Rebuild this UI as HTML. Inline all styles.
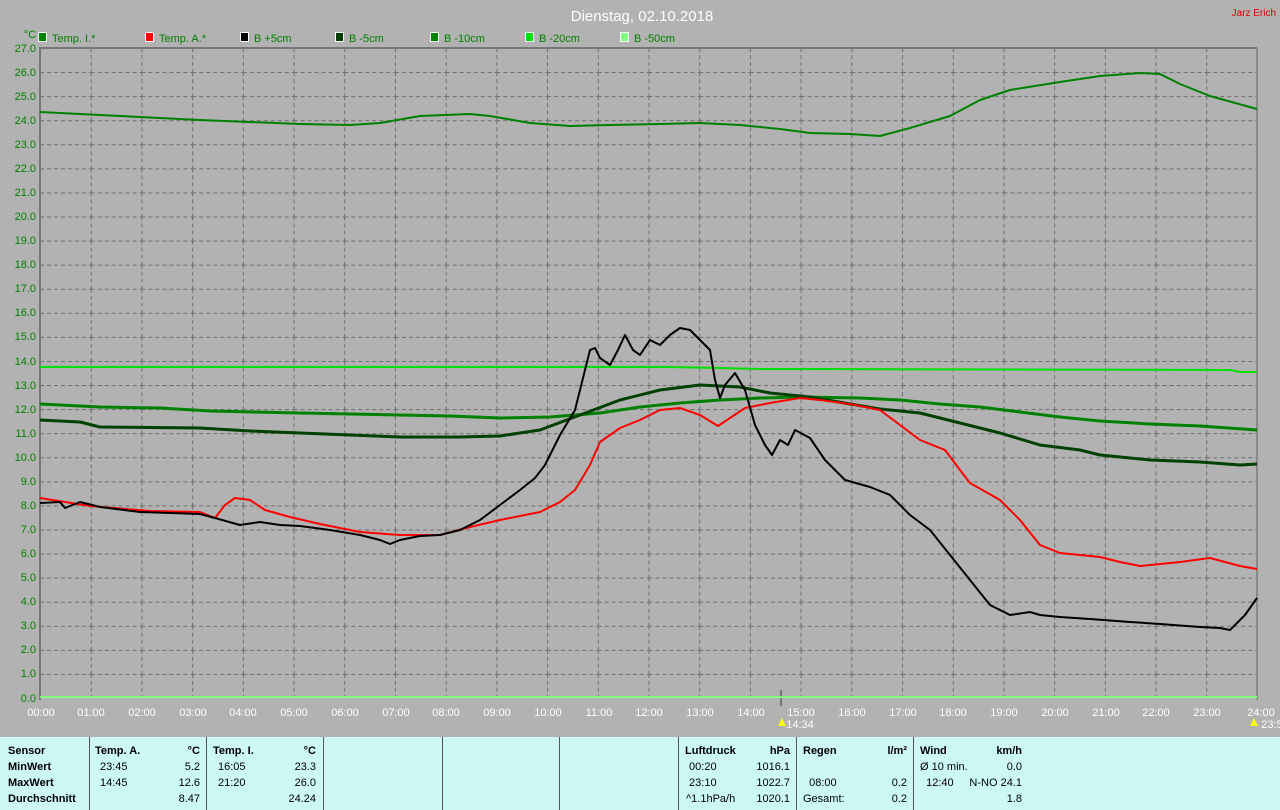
<!DOCTYPE html>
<html><head><meta charset="utf-8"><style>
html,body{margin:0;padding:0}
body{width:1280px;height:810px;background:#b2b2b2;position:relative;overflow:hidden;font-family:"Liberation Sans",sans-serif}
svg{position:absolute;left:0;top:0}
.p{position:absolute;left:0;top:737px;width:1280px;height:73px;background:#ccf8f6}
.d{position:absolute;top:0;width:1px;height:73px;background:#555}
.t{position:absolute;font-size:11px;color:#000;white-space:nowrap;line-height:16px}
.b{font-weight:bold}
</style></head><body>
<svg width="1280" height="737" font-family="Liberation Sans, sans-serif">
<defs>
<pattern id="g" x="40" y="48" width="50.708" height="24.074" patternUnits="userSpaceOnUse">
<line x1="0.5" y1="0" x2="0.5" y2="24.074" stroke="#6e6e6e" stroke-dasharray="4,3"/>
<line x1="0" y1="0.5" x2="50.708" y2="0.5" stroke="#6e6e6e" stroke-dasharray="4,3"/>
</pattern>
</defs>
<rect x="40" y="48" width="1217" height="650" fill="url(#g)"/>
<line x1="40" y1="48" x2="1257" y2="48" stroke="#777" stroke-width="2"/>
<line x1="40" y1="47" x2="40" y2="700" stroke="#777" stroke-width="2"/>
<line x1="1257" y1="48" x2="1257" y2="700" stroke="#888" stroke-width="2"/>
<line x1="781" y1="690" x2="781" y2="706" stroke="#777" stroke-width="2"/>
<text x="642" y="21" fill="#fff" font-size="15" text-anchor="middle">Dienstag, 02.10.2018</text>
<text x="1276" y="16" fill="#e00000" font-size="10" text-anchor="end">Jarz Erich</text>
<text x="30" y="38" fill="#008000" font-size="11" text-anchor="middle">°C</text>
<g font-size="11">
<rect x="38.5" y="32.5" width="8" height="9" fill="#008000" stroke="#fff"/><text x="52" y="42" fill="#008000">Temp. I.*</text>
<rect x="145.5" y="32.5" width="8" height="9" fill="#f00" stroke="#fff"/><text x="159" y="42" fill="#008000">Temp. A.*</text>
<rect x="240.5" y="32.5" width="8" height="9" fill="#000" stroke="#fff"/><text x="254" y="42" fill="#008000">B +5cm</text>
<rect x="335.5" y="32.5" width="8" height="9" fill="#004000" stroke="#fff"/><text x="349" y="42" fill="#008000">B -5cm</text>
<rect x="430.5" y="32.5" width="8" height="9" fill="#008000" stroke="#fff"/><text x="444" y="42" fill="#008000">B -10cm</text>
<rect x="525.5" y="32.5" width="8" height="9" fill="#00e000" stroke="#fff"/><text x="539" y="42" fill="#008000">B -20cm</text>
<rect x="620.5" y="32.5" width="8" height="9" fill="#80ff80" stroke="#fff"/><text x="634" y="42" fill="#008000">B -50cm</text>
</g>
<g font-size="11" fill="#008000" text-anchor="end">
<text x="36" y="52">27.0</text><text x="36" y="76">26.0</text><text x="36" y="100">25.0</text><text x="36" y="124">24.0</text><text x="36" y="148">23.0</text><text x="36" y="172">22.0</text><text x="36" y="196">21.0</text><text x="36" y="220">20.0</text><text x="36" y="244">19.0</text><text x="36" y="268">18.0</text><text x="36" y="292">17.0</text><text x="36" y="316">16.0</text><text x="36" y="340">15.0</text><text x="36" y="365">14.0</text><text x="36" y="389">13.0</text><text x="36" y="413">12.0</text><text x="36" y="437">11.0</text><text x="36" y="461">10.0</text><text x="36" y="485">9.0</text><text x="36" y="509">8.0</text><text x="36" y="533">7.0</text><text x="36" y="557">6.0</text><text x="36" y="581">5.0</text><text x="36" y="605">4.0</text><text x="36" y="629">3.0</text><text x="36" y="653">2.0</text><text x="36" y="677">1.0</text><text x="36" y="702">0.0</text>
</g>
<g font-size="11" fill="#fff" text-anchor="middle">
<text x="41" y="716">00:00</text><text x="91" y="716">01:00</text><text x="142" y="716">02:00</text><text x="193" y="716">03:00</text><text x="243" y="716">04:00</text><text x="294" y="716">05:00</text><text x="345" y="716">06:00</text><text x="396" y="716">07:00</text><text x="446" y="716">08:00</text><text x="497" y="716">09:00</text><text x="548" y="716">10:00</text><text x="599" y="716">11:00</text><text x="649" y="716">12:00</text><text x="700" y="716">13:00</text><text x="751" y="716">14:00</text><text x="801" y="716">15:00</text><text x="852" y="716">16:00</text><text x="903" y="716">17:00</text><text x="953" y="716">18:00</text><text x="1004" y="716">19:00</text><text x="1055" y="716">20:00</text><text x="1106" y="716">21:00</text><text x="1156" y="716">22:00</text><text x="1207" y="716">23:00</text><text x="1261" y="716">24:00</text>
<text x="800" y="728">14:34</text><text x="1272" y="728">23:5</text>
</g>
<polygon points="778,726 782,718 786,726" fill="#ff0"/>
<polygon points="1250,726 1254,718 1258,726" fill="#ff0"/>
<g fill="none" stroke-width="2" stroke-linejoin="round">
<line x1="40" y1="697" x2="1257" y2="697" stroke="#80ff80"/>
<polyline stroke="#00e000" points="40,367 670,367 720,368 760,369 800,369 1230,370 1240,372 1257,372"/>
<polyline stroke="#008000" stroke-width="3" points="40,404 60,405 100,407 160,408 210,411 300,413 400,415 450,416 500,418 550,417 600,413 640,407 680,403 720,400 760,398 800,397 860,398 900,400 940,404 980,407 1020,412 1060,417 1100,421 1150,424 1200,426 1257,430"/>
<polyline stroke="#004000" stroke-width="3" points="40,420 80,422 100,427 200,428 250,431 300,433 350,435 400,437 460,437 500,436 540,430 580,415 620,400 660,390 700,385 740,387 770,393 810,397 850,404 880,409 920,413 960,423 1000,433 1040,445 1080,450 1100,455 1150,460 1200,462 1240,465 1257,464"/>
<polyline stroke="#008000" points="40,112 100,115 200,120 300,124 350,125 380,123 420,116 470,114 490,116 530,123 570,126 610,125 660,124 700,123 740,125 780,129 810,133 850,134 880,136 910,128 950,116 980,100 1010,90 1060,82 1100,76 1140,73 1160,74 1180,84 1210,96 1257,109"/>
<polyline stroke="#f00" points="40,498 90,506 150,511 200,512 215,518 225,505 235,498 250,500 265,510 290,517 320,524 360,532 400,535 440,535 470,527 500,520 540,512 560,502 575,490 590,465 600,442 620,428 640,420 660,410 680,408 700,415 718,426 730,418 745,408 770,403 800,398 820,400 850,404 880,410 900,425 920,440 945,450 960,470 970,483 1000,500 1020,520 1040,545 1060,553 1100,557 1120,562 1140,566 1180,562 1210,558 1240,566 1257,569"/>
<polyline stroke="#000" points="40,503 60,502 65,508 80,502 100,507 140,512 200,514 215,518 240,525 260,522 280,525 300,526 330,530 360,535 380,540 390,544 400,540 420,536 440,535 460,530 480,520 500,505 520,490 535,478 545,465 560,435 575,410 585,370 590,350 595,348 600,358 610,365 618,350 625,335 633,350 640,355 650,340 660,345 670,335 680,328 690,330 700,340 710,350 715,380 720,398 725,385 735,373 745,390 755,425 765,445 772,455 780,440 788,445 795,430 810,438 825,460 845,480 870,487 890,495 910,515 930,530 950,555 970,580 990,605 1010,615 1030,612 1040,615 1060,617 1090,619 1130,622 1160,624 1200,627 1220,628 1230,630 1245,615 1257,598"/>
</g>
</svg>
<div class="p">
<div class="d" style="left:89px"></div><div class="d" style="left:206px"></div><div class="d" style="left:323px"></div><div class="d" style="left:442px"></div><div class="d" style="left:559px"></div><div class="d" style="left:678px"></div><div class="d" style="left:796px"></div><div class="d" style="left:913px"></div>
<div class="t b" style="left:8px;top:6px">Sensor<br>MinWert<br>MaxWert<br>Durchschnitt</div>
<div class="t b" style="left:95px;top:6px">Temp. A.</div>
<div class="t" style="left:100px;top:22px">23:45<br>14:45</div>
<div class="t" style="left:150px;top:6px;width:50px;text-align:right"><b>°C</b><br>5.2<br>12.6<br>8.47</div>
<div class="t b" style="left:213px;top:6px">Temp. I.</div>
<div class="t" style="left:218px;top:22px">16:05<br>21:20</div>
<div class="t" style="left:266px;top:6px;width:50px;text-align:right"><b>°C</b><br>23.3<br>26.0<br>24.24</div>
<div class="t b" style="left:685px;top:6px">Luftdruck</div>
<div class="t" style="left:686px;top:22px">&nbsp;00:20<br>&nbsp;23:10<br>^1.1hPa/h</div>
<div class="t" style="left:740px;top:6px;width:50px;text-align:right"><b>hPa</b><br>1016.1<br>1022.7<br>1020.1</div>
<div class="t b" style="left:803px;top:6px">Regen</div>
<div class="t" style="left:803px;top:38px">&nbsp;&nbsp;08:00<br>Gesamt:</div>
<div class="t" style="left:857px;top:6px;width:50px;text-align:right"><b>l/m²</b><br>&nbsp;<br>0.2<br>0.2</div>
<div class="t b" style="left:920px;top:6px">Wind</div>
<div class="t" style="left:920px;top:22px">Ø 10 min.<br>&nbsp;&nbsp;12:40</div>
<div class="t" style="left:952px;top:6px;width:70px;text-align:right"><b>km/h</b><br>0.0<br>N-NO 24.1<br>1.8</div>
</div>
</body></html>
